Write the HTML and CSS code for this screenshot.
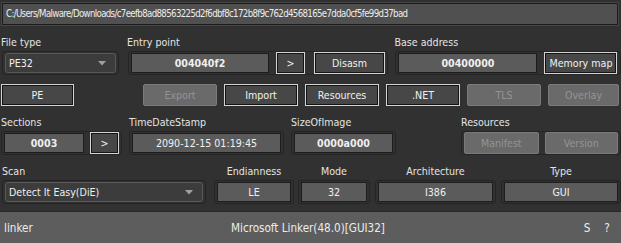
FILE: index.html
```html
<!DOCTYPE html>
<html lang="en">
<head>
    <meta charset="UTF-8">
    <title>Detect It Easy</title>
    <link rel="stylesheet" href="styles.css">
</head>
<body>
    <div class="window">
        <div class="path-field">C:/Users/Malware/Downloads/c7eefb8ad88563225d2f6dbf8c172b8f9c762d4568165e7dda0cf5fe99d37bad</div>

        <!-- file type / entry point / base address -->
        <div class="row row-one">
            <div class="block w-ft">
                <div class="label">File type</div>
                <div class="frame">
                    <div class="combo w-ft-combo">
                        <span>PE32</span>
                        <svg class="arrow" width="8" height="5" viewBox="0 0 8 5"><path d="M0 0H8L4 4.5Z" fill="#a0a0a0"/></svg>
                    </div>
                </div>
            </div>
            <div class="block w-ep gap-9">
                <div class="label">Entry point</div>
                <div class="frame">
                    <div class="field bold w-ep-field">004040f2</div>
                    <button class="btn w-arrow ml-7">&gt;</button>
                    <button class="btn w-disasm ml-9">Disasm</button>
                </div>
            </div>
            <div class="block w-ba gap-7">
                <div class="label">Base address</div>
                <div class="frame">
                    <div class="field bold w-ba-field">00400000</div>
                    <button class="btn w-memmap ml-7">Memory map</button>
                </div>
            </div>
        </div>

        <!-- info buttons -->
        <div class="row row-two">
            <button class="btn w-pe">PE</button>
            <div class="btn-set">
                <button class="btn off">Export</button>
                <button class="btn">Import</button>
                <button class="btn">Resources</button>
                <button class="btn">.NET</button>
                <button class="btn off">TLS</button>
                <button class="btn off w-last">Overlay</button>
            </div>
        </div>

        <!-- sections / timestamp / size / resources -->
        <div class="row row-three">
            <div class="block w-sec">
                <div class="label">Sections</div>
                <div class="frame">
                    <div class="field bold w-sec-field">0003</div>
                    <button class="btn w-arrow ml-6">&gt;</button>
                </div>
            </div>
            <div class="block w-tds gap-7">
                <div class="label">TimeDateStamp</div>
                <div class="frame">
                    <div class="field w-tds-field">2090-12-15 01:19:45</div>
                </div>
            </div>
            <div class="block w-soi gap-7">
                <div class="label">SizeOfImage</div>
                <div class="frame">
                    <div class="field bold w-soi-field">0000a000</div>
                </div>
            </div>
            <div class="block w-res gap-65">
                <div class="label">Resources</div>
                <div class="frame">
                    <button class="btn off w-manifest">Manifest</button>
                    <button class="btn off w-version ml-6">Version</button>
                </div>
            </div>
        </div>

        <!-- scan result -->
        <div class="row row-four">
            <div class="block w-scan">
                <div class="label">Scan</div>
                <div class="frame">
                    <div class="combo w-scan-combo">
                        <span>Detect It Easy(DiE)</span>
                        <svg class="arrow" width="8" height="5" viewBox="0 0 8 5"><path d="M0 0H8L4 4.5Z" fill="#a0a0a0"/></svg>
                    </div>
                </div>
            </div>
            <div class="block w-end gap-8">
                <div class="label center">Endianness</div>
                <div class="frame">
                    <div class="field w-fill">LE</div>
                </div>
            </div>
            <div class="block w-mode gap-4">
                <div class="label center">Mode</div>
                <div class="frame">
                    <div class="field w-fill">32</div>
                </div>
            </div>
            <div class="block w-arch gap-5">
                <div class="label center">Architecture</div>
                <div class="frame">
                    <div class="field w-fill">I386</div>
                </div>
            </div>
            <div class="block w-type gap-5">
                <div class="label center">Type</div>
                <div class="frame">
                    <div class="field w-fill">GUI</div>
                </div>
            </div>
        </div>

        <div class="status">
            <span class="status-name">linker</span>
            <span class="status-value">Microsoft Linker(48.0)[GUI32]</span>
            <span class="status-btn">S</span>
            <span class="status-btn">?</span>
        </div>
    </div>
</body>
</html>
```

FILE: styles.css
```css
body {
    margin: 0;
    background-color: #313131;
    font-family: "DejaVu Sans Condensed", "DejaVu Sans", sans-serif;
    font-stretch: condensed;
    font-size: 10.6px;
    color: #e4e4e4;
}
.window {
    width: 621px;
    height: 243px;
    display: flex;
    flex-direction: column;
    overflow: hidden;
}
.path-field {
    margin: 3px 3px 0 2px;
    height: 22px;
    box-sizing: border-box;
    padding: 0 3px;
    line-height: 20px;
    font-size: 9.6px;
    letter-spacing: -0.65px;
    background-color: #505050;
    border: 1px solid #1c1c1c;
    box-shadow: 0 0 0 1px #464646;
    color: #ececec;
    white-space: nowrap;
}
.row {
    display: flex;
}
.row-one { margin-top: 11px; padding-left: 2px; }
.row-two { margin-top: 9px; padding-left: 1px; align-items: center; }
.row-three { margin-top: 10px; padding-left: 1px; }
.row-four { margin-top: 10px; padding-left: 2px; }

.block {
    display: flex;
    flex-direction: column;
}
.label {
    height: 13px;
    line-height: 13px;
    margin-bottom: 2px;
    white-space: nowrap;
}
.label.center { text-align: center; }
.row-one .label { margin-left: -1px; }
.frame {
    height: 24px;
    box-sizing: border-box;
    border: 1px solid #242424;
    border-radius: 3px;
    display: flex;
    align-items: center;
    padding: 0 2px;
}
.field {
    height: 20px;
    box-sizing: border-box;
    background-color: #5b5b5b;
    border: 1px solid #1d1d1d;
    text-align: center;
    line-height: 18px;
    color: #f0f0f0;
    white-space: nowrap;
}
.bold { font-weight: bold; }
.combo {
    height: 20px;
    box-sizing: border-box;
    background-color: #3c3c3c;
    border: 1px solid #585858;
    border-radius: 3px;
    display: flex;
    align-items: center;
    justify-content: space-between;
    padding: 0 9px 0 3px;
    color: #f0f0f0;
}
.arrow { display: block; }
.btn {
    height: 22px;
    box-sizing: border-box;
    padding: 0;
    font: inherit;
    color: #f0f0f0;
    background-color: #474747;
    border: 1px solid #d4d4d4;
    box-shadow: inset 0 0 0 1px #141414;
    cursor: pointer;
}
.btn.off {
    background-color: #6a6a6a;
    border: 1px solid #7a7a7a;
    border-radius: 2px;
    box-shadow: none;
    color: #949494;
}
.btn-set {
    display: flex;
    gap: 7px;
    margin-left: 69px;
}
.btn-set .btn { width: 74px; }
.btn-set .w-last { width: 71px; }

.gap-4 { margin-left: 4px; }
.gap-5 { margin-left: 5px; }
.gap-7 { margin-left: 7px; }
.gap-8 { margin-left: 8px; }
.gap-9 { margin-left: 9px; }
.gap-65 { margin-left: 65px; }
.ml-6 { margin-left: 6px; }
.ml-7 { margin-left: 7px; }
.ml-9 { margin-left: 9px; }

.w-ft { width: 117px; }
.w-ft-combo { width: 111px; }
.w-ep { width: 261px; }
.w-ep-field { width: 138px; }
.w-arrow { width: 29px; }
.w-disasm { width: 71px; }
.w-ba { width: 226px; }
.w-ba-field { width: 139px; }
.w-memmap { width: 73px; }
.w-pe { width: 73px; }
.w-sec { width: 121px; }
.w-sec-field { width: 80px; }
.w-tds { width: 155px; }
.w-tds-field { width: 149px; }
.w-soi { width: 105px; }
.w-soi-field { width: 101px; }
.w-res { width: 160px; }
.w-manifest { width: 75px; }
.w-version { width: 74px; }
.w-scan { width: 204px; }
.w-scan-combo { width: 199px; }
.w-end { width: 80px; }
.w-mode { width: 72px; }
.w-arch { width: 121px; }
.w-type { width: 120px; }
.w-fill { flex: 1; }

.status {
    margin-top: auto;
    height: 31px;
    background-color: #5d5d5d;
    border-top: 1px solid #262626;
    display: flex;
    align-items: center;
    color: #ececec;
    font-size: 11.6px;
}
.status-name {
    width: 231px;
    padding-left: 4px;
    box-sizing: border-box;
}
.status-value { flex: 1; }
.status-btn {
    width: 20px;
    text-align: center;
}
.status-btn:last-child { margin-right: 4px; }
```
